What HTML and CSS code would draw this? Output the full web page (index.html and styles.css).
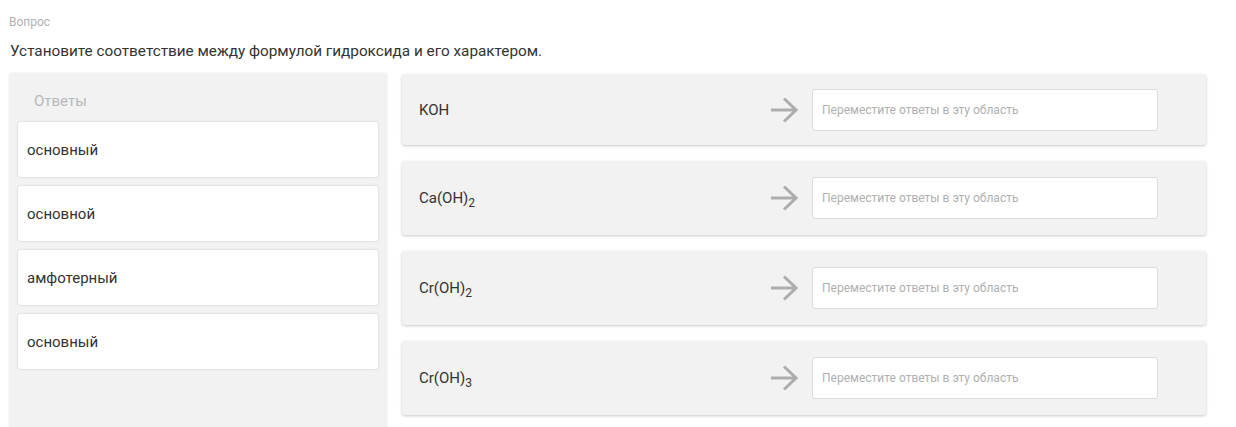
FILE: index.html
```html
<!DOCTYPE html>
<html lang="ru">
<head>
<meta charset="utf-8">
<link rel="stylesheet" href="styles.css">
</head>
<body>
<div class="page">
  <div class="label">Вопрос</div>
  <div class="question">Установите соответствие между формулой гидроксида и его характером.</div>
  <div class="match">
    <div class="answers">
      <div class="answers-title">Ответы</div>
      <div class="card">основный</div>
      <div class="card">основной</div>
      <div class="card">амфотерный</div>
      <div class="card">основный</div>
    </div>
    <div class="rows">
      <div class="row">
        <div class="formula">KOH</div>
        <svg class="arrow" width="28" height="26" viewBox="0 0 28 26"><path d="M1 13H26M14 1.5L26 13L14 24.5" fill="none" stroke="#adadad" stroke-width="3"/></svg>
        <div class="drop">Переместите ответы в эту область</div>
      </div>
      <div class="row tall">
        <div class="formula">Ca(OH)<sub>2</sub></div>
        <svg class="arrow" width="28" height="26" viewBox="0 0 28 26"><path d="M1 13H26M14 1.5L26 13L14 24.5" fill="none" stroke="#adadad" stroke-width="3"/></svg>
        <div class="drop">Переместите ответы в эту область</div>
      </div>
      <div class="row tall">
        <div class="formula">Cr(OH)<sub>2</sub></div>
        <svg class="arrow" width="28" height="26" viewBox="0 0 28 26"><path d="M1 13H26M14 1.5L26 13L14 24.5" fill="none" stroke="#adadad" stroke-width="3"/></svg>
        <div class="drop">Переместите ответы в эту область</div>
      </div>
      <div class="row tall">
        <div class="formula">Cr(OH)<sub>3</sub></div>
        <svg class="arrow" width="28" height="26" viewBox="0 0 28 26"><path d="M1 13H26M14 1.5L26 13L14 24.5" fill="none" stroke="#adadad" stroke-width="3"/></svg>
        <div class="drop">Переместите ответы в эту область</div>
      </div>
    </div>
  </div>
</div>
</body>
</html>
```

FILE: styles.css
```css
html, body {
  margin: 0;
  padding: 0;
  background: #fff;
  overflow: hidden;
}
body {
  font-family: Roboto, "Noto Sans", sans-serif;
  color: #333;
}
.page {
  padding: 15px 0 0 9px;
}
.label {
  font-size: 12px;
  line-height: 14px;
  color: #b0b0b0;
}
.question {
  margin-top: 13px;
  font-size: 15.3px;
  line-height: 18px;
  color: #333;
  padding-left: 1px;
}
.match {
  display: flex;
  align-items: flex-start;
  margin-top: 13px;
}
.answers {
  width: 378px;
  height: 360px;
  background: #f2f2f2;
  border-radius: 3px;
  box-shadow: 0 0 2px rgba(0,0,0,0.12);
  padding: 17px 9px 0 9px;
  box-sizing: border-box;
  display: flex;
  flex-direction: column;
  gap: 9px;
  flex-shrink: 0;
}
.answers-title {
  font-size: 15px;
  line-height: 22px;
  color: #b8b8b8;
  padding-left: 16px;
  margin-bottom: 1px;
}
.card {
  height: 55px;
  background: #fff;
  border-radius: 2px;
  box-shadow: 0 0 2px rgba(0,0,0,0.22);
  display: flex;
  align-items: center;
  padding-left: 9px;
  font-size: 15px;
  color: #333;
  box-sizing: border-box;
}
.rows {
  margin-left: 15px;
  margin-top: 1px;
  width: 804px;
  display: flex;
  flex-direction: column;
  gap: 16px;
}
.row {
  height: 71px;
  background: #f2f2f2;
  border-radius: 3px;
  box-shadow: 0 1px 3px rgba(0,0,0,0.22);
  display: flex;
  align-items: center;
  padding: 0 48px 0 17px;
  box-sizing: border-box;
}
.row.tall {
  height: 74px;
}
.formula {
  flex: 1;
  font-size: 15px;
  color: #333;
  line-height: 18px;
}
.formula sub {
  font-size: 12px;
  vertical-align: -4px;
  line-height: 0;
}
.arrow {
  display: block;
  margin-right: 14px;
}
.drop {
  width: 346px;
  height: 42px;
  background: #fff;
  border: 1px solid #dcdcdc;
  border-radius: 3px;
  box-sizing: border-box;
  display: flex;
  align-items: center;
  padding-left: 9px;
  font-size: 12px;
  color: #b0b0b0;
}
```
